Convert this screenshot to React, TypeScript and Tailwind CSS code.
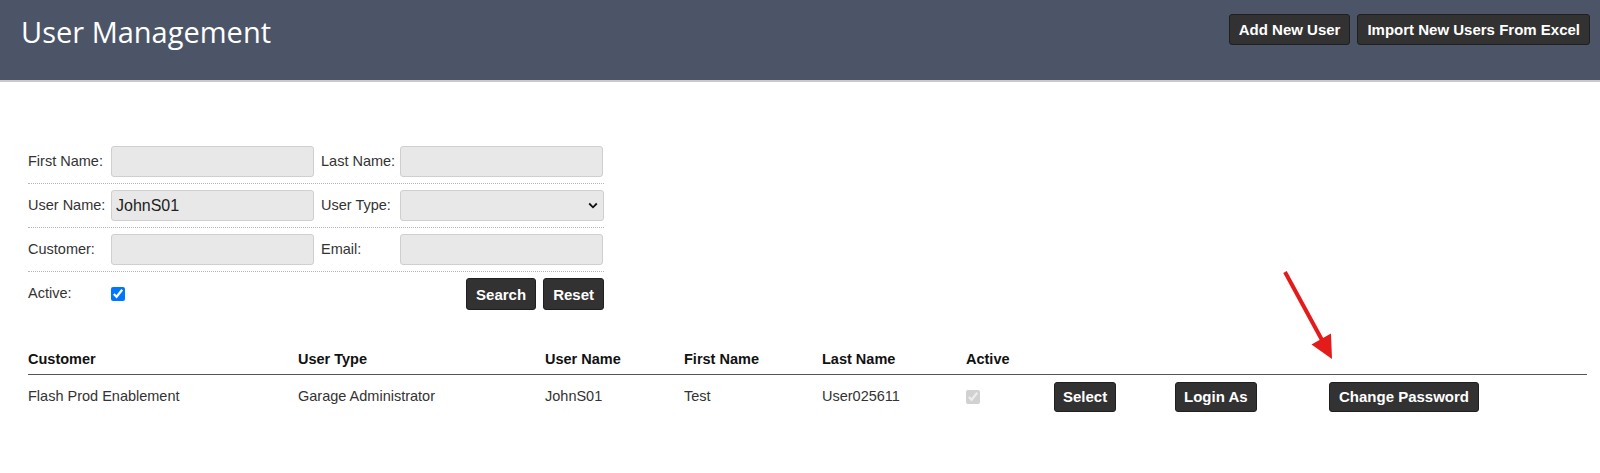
import React from "react";

const arial = { fontFamily: '"Liberation Sans", Arial, sans-serif' } as React.CSSProperties;

function DarkButton({ children, className = "" }: { children: React.ReactNode; className?: string }) {
  return (
    <button
      className={`bg-[#323232] border border-[#1f1f1f] rounded-[3px] text-white font-bold text-[15px] px-2 leading-none whitespace-nowrap ${className}`}
      style={arial}
    >
      {children}
    </button>
  );
}

function TextInput({ value = "" }: { value?: string }) {
  return (
    <input
      readOnly
      value={value}
      className="w-[203px] h-[31px] bg-[#e8e8e8] border border-[#cfcfcf] rounded-[3px] px-[4px] text-[16px] text-[#222] outline-none"
      style={arial}
    />
  );
}

function Label({ children, className = "" }: { children: React.ReactNode; className?: string }) {
  return (
    <div className={`text-[14.5px] text-[#333] ${className}`} style={arial}>
      {children}
    </div>
  );
}

export default function App() {
  return (
    <div className="relative w-[1600px] h-[473px] bg-white overflow-hidden" style={arial}>
      {/* Header */}
      <div className="h-[82px] bg-[#4b5567] border-b-2 border-[#c9c9c9] flex items-start justify-between pl-[21px] pr-[10px]">
        <div
          className="text-white text-[29px] leading-[38px] pt-[13px]"
          style={{ fontFamily: '"Open Sans", "Noto Sans", sans-serif' }}
        >
          User Management
        </div>
        <div className="flex gap-[7px] pt-[14px]">
          <DarkButton className="h-[31px] px-[9px]">Add New User</DarkButton>
          <DarkButton className="h-[31px] px-[9px]">Import New Users From Excel</DarkButton>
        </div>
      </div>

      {/* Search form */}
      <div className="ml-[28px] mt-[58px] w-[576px]">
        <div className="flex items-center py-[6px] border-b border-dotted border-[#b5b5b5]">
          <Label className="w-[83px]">First Name:</Label>
          <TextInput />
          <Label className="w-[86px] pl-[7px]">Last Name:</Label>
          <TextInput />
        </div>
        <div className="flex items-center py-[6px] border-b border-dotted border-[#b5b5b5]">
          <Label className="w-[83px]">User Name:</Label>
          <TextInput value="JohnS01" />
          <Label className="w-[86px] pl-[7px]">User Type:</Label>
          <div className="relative">
            <select
              className="appearance-none w-[204px] h-[31px] bg-[#e8e8e8] border border-[#cfcfcf] rounded-[3px] px-[4px] text-[16px] outline-none"
              style={arial}
            >
              <option></option>
            </select>
            <svg
              className="absolute right-[6px] top-[12px]"
              width="10"
              height="7"
              viewBox="0 0 10 7"
              fill="none"
            >
              <path d="M1.2 1.5 L5 5.3 L8.8 1.5" stroke="#111" strokeWidth="1.8" />
            </svg>
          </div>
        </div>
        <div className="flex items-center py-[6px] border-b border-dotted border-[#b5b5b5]">
          <Label className="w-[83px]">Customer:</Label>
          <TextInput />
          <Label className="w-[86px] pl-[7px]">Email:</Label>
          <TextInput />
        </div>
        <div className="flex items-center pt-[6px]">
          <Label className="w-[83px]">Active:</Label>
          <input type="checkbox" defaultChecked className="w-[14px] h-[14px] m-0" />
          <div className="flex-1 flex justify-end gap-[7px]">
            <DarkButton className="h-[32px] px-[9px]">Search</DarkButton>
            <DarkButton className="h-[32px] px-[9px]">Reset</DarkButton>
          </div>
        </div>
      </div>

      {/* Results table */}
      <div className="ml-[28px] mt-[39px] w-[1559px]">
        <div className="grid grid-cols-[270px_247px_139px_138px_144px_88px_121px_154px_1fr] border-b-[1.5px] border-[#555] pb-[3px] text-[14.5px] font-bold text-[#111]">
          <div>Customer</div>
          <div>User Type</div>
          <div>User Name</div>
          <div>First Name</div>
          <div>Last Name</div>
          <div>Active</div>
          <div></div>
          <div></div>
          <div></div>
        </div>
        <div className="grid grid-cols-[270px_247px_139px_138px_144px_88px_121px_154px_1fr] items-center pt-[7px] text-[14.5px] text-[#333]">
          <div>Flash Prod Enablement</div>
          <div>Garage Administrator</div>
          <div>JohnS01</div>
          <div>Test</div>
          <div>User025611</div>
          <div className="flex">
            <input type="checkbox" defaultChecked disabled className="w-[14px] h-[14px] m-0" />
          </div>
          <div>
            <DarkButton className="h-[30px]">Select</DarkButton>
          </div>
          <div>
            <DarkButton className="h-[30px]">Login As</DarkButton>
          </div>
          <div>
            <DarkButton className="h-[30px] px-[9px]">Change Password</DarkButton>
          </div>
        </div>
      </div>

      {/* Red annotation arrow */}
      <svg className="absolute left-0 top-0 pointer-events-none" width="1600" height="473">
        <line x1="1285" y1="272" x2="1322" y2="340" stroke="#e41b1b" strokeWidth="4" />
        <polygon points="1332,359 1311.5,344.5 1331,333.5" fill="#e41b1b" />
      </svg>
    </div>
  );
}
